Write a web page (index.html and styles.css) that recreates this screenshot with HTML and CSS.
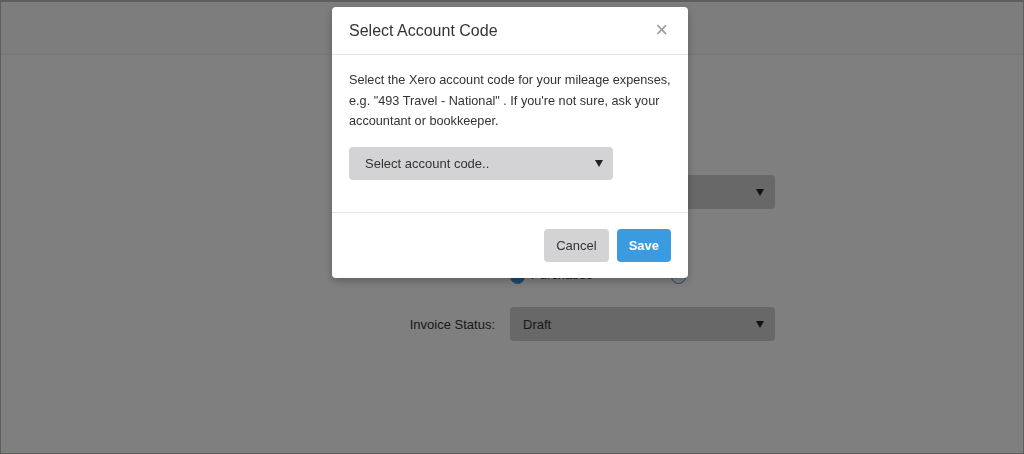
FILE: index.html
```html
<!DOCTYPE html>
<html lang="en">
<head>
    <meta charset="UTF-8" />
    <title>Xero Settings</title>
    <link rel="stylesheet" href="styles.css">
</head>
<body>

<div class="frame">

    <!-- ===== PAGE (behind the modal) ===== -->
    <header class="topbar"></header>

    <main class="settings">
        <label class="field-label">Organisation:</label>
        <div class="fake-select">
            <span>Demo Company</span>
            <span class="caret"></span>
        </div>

        <span class="field-label row-type"></span>
        <div class="radio-group row-type">
            <span class="radio-option"><span class="radio checked"></span>Purchases</span>
            <span class="radio-option"><span class="radio"></span></span>
        </div>

        <label class="field-label">Invoice Status:</label>
        <div class="fake-select">
            <span>Draft</span>
            <span class="caret"></span>
        </div>
    </main>

    <!-- ===== OVERLAY + MODAL ===== -->
    <div class="backdrop"></div>

    <div class="modal" role="dialog" aria-labelledby="modalTitle">
        <div class="modal-header">
            <h4 id="modalTitle">Select Account Code</h4>
            <button class="close" aria-label="Close">&times;</button>
        </div>
        <div class="modal-body">
            <p>Select the Xero account code for your mileage expenses, e.g. "493 Travel - National" . If you're not sure, ask your accountant or bookkeeper.</p>
            <div class="fake-select modal-select">
                <span>Select account code..</span>
                <span class="caret"></span>
            </div>
        </div>
        <div class="modal-footer">
            <button class="btn btn-default">Cancel</button>
            <button class="btn btn-primary">Save</button>
        </div>
    </div>

</div>

</body>
</html>
```

FILE: styles.css
```css
* { box-sizing: border-box; }

html, body { height: 100%; }

body {
    margin: 0;
    font-family: "Liberation Sans", Arial, sans-serif;
    font-size: 13px;
    color: #333;
    background: #fff;
}

.frame {
    height: 100%;
    border: 1px solid #b8bcb8;
    border-top-width: 2px;
}

/* ─────────── Page behind ─────────── */
.topbar {
    height: 53px;
    background: #fafafa;
    border-bottom: 1px solid #eee;
}

.settings {
    display: grid;
    grid-template-columns: 494px 265px;
    column-gap: 15px;
    align-items: center;
    padding-top: 120px;
}
.field-label {
    text-align: right;
}
.fake-select {
    height: 34px;
    background: #d0d0d0;
    border-radius: 4px;
    display: flex;
    align-items: center;
    justify-content: space-between;
    padding: 0 11px 0 13px;
}
.caret {
    width: 0;
    height: 0;
    border-left: 4.5px solid transparent;
    border-right: 4.5px solid transparent;
    border-top: 7px solid #222;
}
.row-type {
    margin: 55px 0 23px;
}
.radio-group {
    display: flex;
    height: 20px;
    align-items: center;
    overflow: visible;
}
.radio-option {
    display: flex;
    align-items: center;
    flex: 0 0 161px;
}
.radio {
    width: 15px;
    height: 15px;
    border-radius: 50%;
    border: 1.5px solid #3a94dc;
    margin: 5px 6px 0 0;
}
.radio.checked {
    background: #3a94dc;
}

.backdrop {
    position: fixed;
    inset: 0;
    background: rgba(0,0,0,.5);
}

/* ─────────── Modal ─────────── */
.modal {
    position: fixed;
    top: 7px;
    left: 332px;
    width: 356px;
    background: #fff;
    border-radius: 4px;
    box-shadow: 0 3px 9px rgba(0,0,0,.25);
}
.modal-header {
    height: 48px;
    display: flex;
    align-items: center;
    justify-content: space-between;
    padding: 0 17px;
    border-bottom: 1px solid #e5e5e5;
}
.modal-header h4 {
    margin: 0;
    font-size: 16px;
    font-weight: 400;
    color: #333;
}
.close {
    background: none;
    border: none;
    padding: 0 3px 2px;
    font-family: "Liberation Sans", Arial, sans-serif;
    font-size: 22px;
    font-weight: 400;
    line-height: 1;
    color: #9a9a9a;
    cursor: pointer;
}
.modal-body {
    padding: 15px 17px 32px;
}
.modal-body p {
    margin: 0 -4px 15px 0;
    line-height: 20.5px;
    font-size: 12.7px;
}
.modal-select {
    width: 264px;
    height: 33px;
    background: #d3d3d5;
    padding: 0 10px 0 16px;
}
.modal-footer {
    display: flex;
    justify-content: flex-end;
    gap: 8px;
    padding: 16px 17px 16px;
    border-top: 1px solid #e5e5e5;
}
.btn {
    height: 33px;
    padding: 0 12px;
    border: none;
    border-radius: 4px;
    font-family: "Liberation Sans", Arial, sans-serif;
    font-size: 13px;
    cursor: pointer;
}
.btn-default {
    background: #d3d3d5;
    color: #333;
}
.btn-primary {
    background: #3a9be0;
    color: #fff;
    font-weight: 700;
}
```
